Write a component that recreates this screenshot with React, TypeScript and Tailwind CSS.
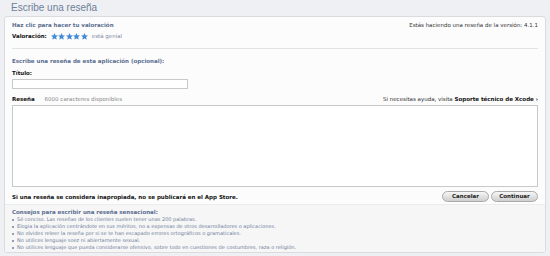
import React from 'react';

const font = { fontFamily: '"Lucida Grande", "DejaVu Sans", Verdana, sans-serif' };

function Star() {
  return (
    <svg viewBox="0 0 24 24" className="h-[7px] w-[7px]">
      <path
        d="M12 1.5l3.1 6.9 7.4.7-5.6 5 1.7 7.4L12 17.6l-6.6 3.9 1.7-7.4-5.6-5 7.4-.7z"
        fill="#3f8de0"
        stroke="#2f74c4"
        strokeWidth="1"
      />
    </svg>
  );
}

const tips = [
  'Sé conciso. Las reseñas de los clientes suelen tener unas 200 palabras.',
  'Elogia la aplicación centrándote en sus méritos, no a expensas de otros desarrolladores o aplicaciones.',
  'No olvides releer la reseña por si se te han escapado errores ortográficos o gramaticales.',
  'No utilices lenguaje soez ni abiertamente sexual.',
  'No utilices lenguaje que pueda considerarse ofensivo, sobre todo en cuestiones de costumbres, raza o religión.',
];

export default function App() {
  return (
    <div className="h-[256px] w-[550px] overflow-hidden bg-[#eef0f3]" style={font}>
      <h1 className="px-[11px] pt-[1px] text-[10px] leading-[13px] text-[#6f7f98]" style={{ fontFamily: '"Liberation Sans", Arial, sans-serif' }}>
        Escribe una reseña
      </h1>

      <div className="mx-[4px] mt-[2px] h-[237px] overflow-hidden rounded-[3px] border border-[#d9dbde] bg-[#fcfcfc]">
        <div className="px-[7px] pt-[4px]">
          <div className="flex items-center justify-between text-[5.5px] leading-[8px]">
            <span className="font-bold text-[#5a6d90]">Haz clic para hacer tu valoración</span>
            <span className="text-[#333]">Estás haciendo una reseña de la versión: 4.1.1</span>
          </div>
          <div className="mt-[3px] flex items-center text-[5.5px] leading-[9px]">
            <span className="mr-[4px] font-bold text-[#111]">Valoración:</span>
            <div className="flex gap-[0.5px]">
              <Star />
              <Star />
              <Star />
              <Star />
              <Star />
            </div>
            <span className="ml-[4px] text-[#7f8aa3]">está genial</span>
          </div>

          <div className="mt-[7px] h-px bg-[#e3e3e3]" />

          <div className="mt-[8px] text-[5.5px] font-bold leading-[8px] text-[#5a6d90]">
            Escribe una reseña de esta aplicación (opcional):
          </div>
          <div className="mt-[4px] text-[5.5px] font-bold leading-[8px] text-[#111]">Título:</div>
          <div className="mt-[2px] h-[10px] w-[176px] border border-[#c9c9c9] bg-white" />

          <div className="mt-[6px] flex items-center justify-between text-[5.5px] leading-[8px]">
            <div className="flex items-center">
              <span className="font-bold text-[#111]">Reseña</span>
              <span className="ml-[10px] text-[#8a8a8a]">6000 caracteres disponibles</span>
            </div>
            <span className="text-[#333]">
              Si necesitas ayuda, visita <span className="font-bold text-[#111]">Soporte técnico de Xcode ›</span>
            </span>
          </div>
          <div className="mt-[2px] h-[82px] w-full border border-[#c9c9c9] bg-white" />

          <div className="mt-[4px] flex items-center justify-between">
            <span className="text-[5.5px] font-bold leading-[8px] text-[#111]">
              Si una reseña se considera inapropiada, no se publicará en el App Store.
            </span>
            <div className="flex gap-[2px]">
              <button className="h-[11px] w-[47px] rounded-full border border-[#a9a9a9] bg-gradient-to-b from-[#f7f7f7] to-[#cfcfcf] text-[5.5px] font-bold leading-[9px] text-[#222]">
                Cancelar
              </button>
              <button className="h-[11px] w-[47px] rounded-full border border-[#a9a9a9] bg-gradient-to-b from-[#f7f7f7] to-[#cfcfcf] text-[5.5px] font-bold leading-[9px] text-[#222]">
                Continuar
              </button>
            </div>
          </div>
        </div>

        <div className="mt-[2px] h-full border-t border-[#ececec] bg-[#f6f6f6] px-[7px] pt-[3px]">
          <div className="text-[5.5px] font-bold leading-[8px] text-[#5a6d90]">
            Consejos para escribir una reseña sensacional:
          </div>
          <ul className="text-[5px] leading-[7px] text-[#6f7f9c]">
            {tips.map((t) => (
              <li key={t} className="flex items-center">
                <span className="mr-[3px] inline-block h-[2px] w-[2px] rounded-full bg-[#6f7f9c]" />
                {t}
              </li>
            ))}
          </ul>
        </div>
      </div>
    </div>
  );
}
